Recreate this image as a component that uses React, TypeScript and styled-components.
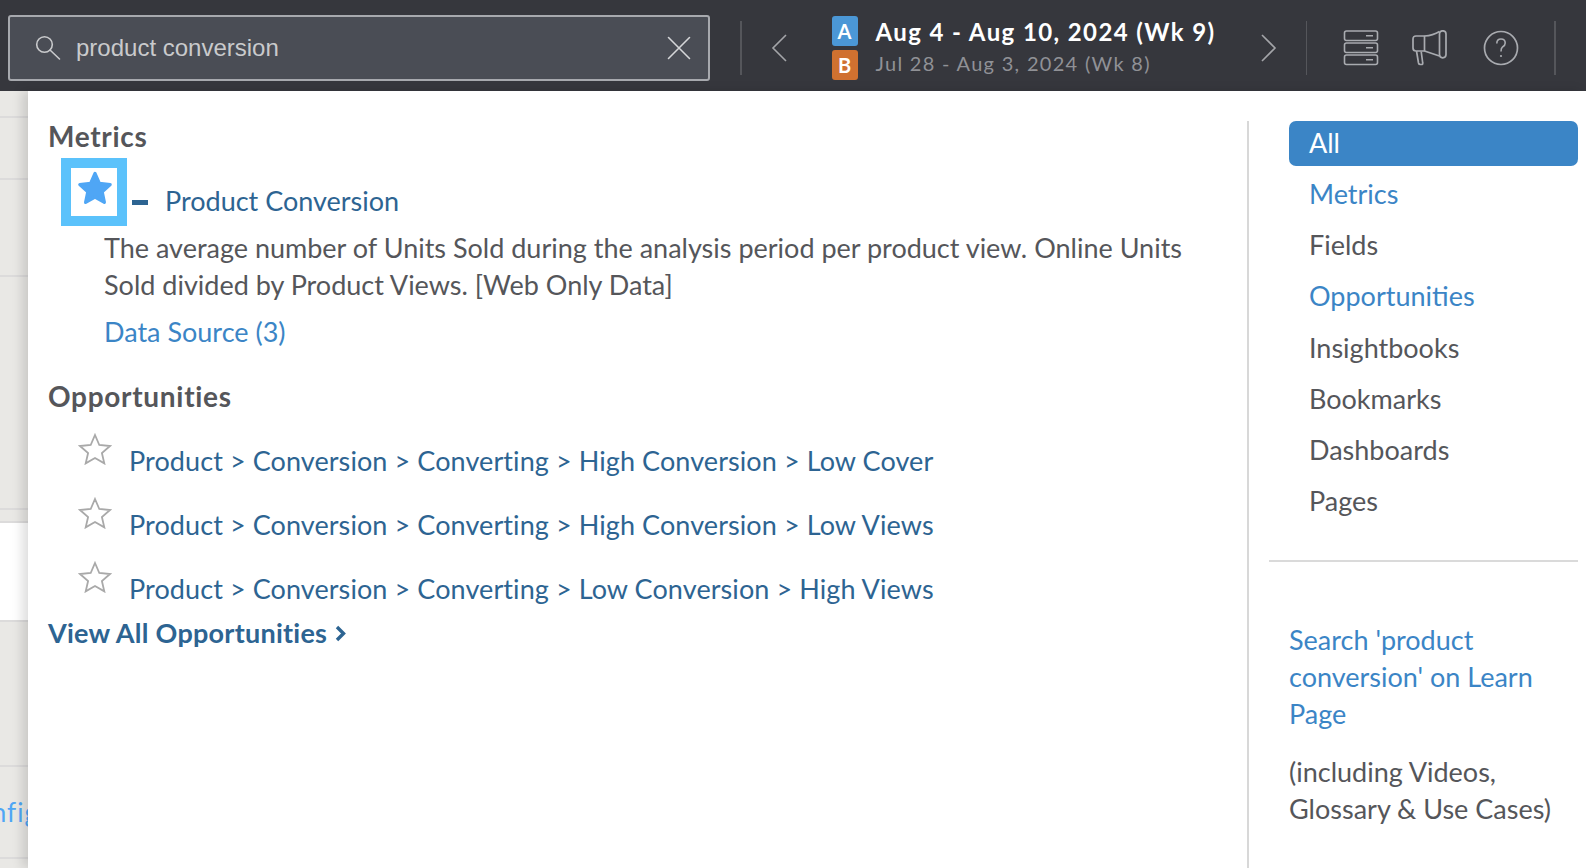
import React from "react";
import styled, { createGlobalStyle } from "styled-components";

const Global = createGlobalStyle`
  html, body { margin: 0; padding: 0; width: 1586px; height: 868px; overflow: hidden; background: #fff; }
  * { box-sizing: border-box; }
`;
const Page = styled.div`
  width: 1586px; height: 868px; display: flex; flex-direction: column; overflow: hidden;
  font-family: "Lato", "Liberation Sans", sans-serif;
`;
const TopBar = styled.header`
  height: 91px; flex: none; background: #36373d; display: flex; align-items: flex-start; padding: 15px 0 0 8px; position: relative;
`;
const SearchBox = styled.div`
  width: 702px; height: 66px; flex: none; background: #4a4d55; border: 2px solid #a7a9ae; border-radius: 3px;
  display: flex; align-items: center; padding: 0 17px 0 24px;
`;
const SearchText = styled.span`
  flex: 1; margin-left: 14px; font: 24px "Liberation Sans", Arial, sans-serif; color: #c9cacc;
`;
const Divider = styled.div<{ $ml: number }>`
  width: 1.5px; height: 54px; margin-top: 6px; background: #55565b; flex: none; margin-left: ${p => p.$ml}px;
`;
const Chevron = styled.svg<{ $ml: number }>`
  width: 16px; height: 28px; flex: none; margin-top: 19px; margin-left: ${p => p.$ml}px;
`;
const Dates = styled.div`
  width: 429px; flex: none; margin-left: 45px; display: flex; flex-direction: column; gap: 4px; margin-top: 1px;
`;
const DateRow = styled.div`display: flex; align-items: center; height: 30px;`;
const Badge = styled.span<{ $bg: string }>`
  width: 26px; height: 30px; border-radius: 3px; background: ${p => p.$bg}; color: #fff; flex: none;
  display: flex; align-items: center; justify-content: center; font-size: 20px; font-weight: 700;
`;
const DateMain = styled.span`
  margin-left: 18px; color: #fff; font-size: 24px; font-weight: 700; letter-spacing: 1.4px; white-space: nowrap;
`;
const DateSub = styled.span`
  margin: 0 0 4px 18px; color: #909196; font-size: 20px; letter-spacing: 1.3px; white-space: nowrap;
`;
const TopIcon = styled.svg<{ $ml: number }>`
  width: 36px; height: 36px; flex: none; margin-top: 15px; margin-left: ${p => p.$ml}px;
`;
const Body = styled.div`flex: 1; display: flex; min-height: 0;`;
const Strip = styled.div`
  width: 28px; flex: none; background: #e9e8e5; display: flex; flex-direction: column; overflow: hidden;
`;
const StripRow = styled.div<{ $h: number; $white?: boolean }>`
  height: ${p => p.$h}px; flex: none; border-bottom: 2px solid #dcdbdb;
  background: ${p => (p.$white ? "#fff" : "transparent")};
  display: flex; align-items: center; justify-content: flex-end; white-space: nowrap;
`;
const StripText = styled.span`color: #4fa6f5; font-size: 26px; letter-spacing: 1px; margin-right: -11px;`;
const Panel = styled.main`
  flex: 1; background: #fff; display: flex; box-shadow: -6px 0 10px rgba(0,0,0,.13); position: relative; min-width: 0;
`;
const Results = styled.section`
  width: 1219px; flex: none; padding: 29px 0 0 20px;
`;
const Heading = styled.h2`
  margin: 0; font-size: 28px; letter-spacing: 0.7px; line-height: 32px; font-weight: 700; color: #55565a;
`;
const MetricHead = styled.div`display: flex; align-items: flex-end; margin: 6px 0 0 13px; height: 68px;`;
const StarBox = styled.div`
  width: 66px; height: 68px; border: 10px solid #5bc2fb; background: #fff; display: flex; align-items: center; justify-content: center;
  padding: 0 0 8px 2px; flex: none;
`;
const Dash = styled.span`
  width: 16px; height: 5px; background: #2d6492; margin: 0 17px 21px 5px; flex: none;
`;
const LinkDark = styled.a`
  color: #2d6492; font-size: 27px; line-height: 37px; white-space: nowrap;
`;
const MetricLink = styled(LinkDark)`margin-bottom: 7px;`;
const Description = styled.p`
  margin: 3px 0 0 56px; width: 1110px; font-size: 27px; line-height: 37px; color: #55565a;
`;
const SourceLink = styled.a`
  display: block; margin: 10px 0 0 56px; color: #3b85c6; font-size: 27px; line-height: 37px;
`;
const OppHeading = styled(Heading)`margin-top: 30px;`;
const OppList = styled.div`display: flex; flex-direction: column; margin-top: 17px;`;
const OppRow = styled.div`display: flex; height: 64px; padding-left: 30px; align-items: flex-start;`;
const OppStar = styled.span`display: flex; margin-top: 4px; flex: none;`;
const OppText = styled(LinkDark)`margin: 13px 0 0 17px; letter-spacing: 0.09px;`;
const ViewAll = styled.a`
  display: flex; align-items: center; gap: 8px; color: #2d6492; font-size: 27px; font-weight: 700; letter-spacing: 0.25px; line-height: 32px; margin-top: -4px;
`;
const VDivider = styled.div`width: 2px; background: #d8d8d8; margin-top: 30px; flex: none;`;
const Side = styled.aside`flex: 1; padding: 30px 8px 0 20px; min-width: 0;`;
const Pill = styled.div`
  height: 45px; margin-left: 20px; border-radius: 7px; background: #3b85c6; color: #fff; font-size: 27px; display: flex; align-items: center; padding: 0 0 2px 20px;
`;
const FilterList = styled.nav`display: flex; flex-direction: column; margin: 2px 0 0 40px;`;
const Filter = styled.a<{ $blue?: boolean }>`
  height: 51.2px; display: flex; align-items: center; font-size: 27px; color: ${p => (p.$blue ? "#3b85c6" : "#55565a")};
`;
const Rule = styled.hr`border: 0; height: 2px; background: #dadada; margin: 34px 0 0 0;`;
const Learn = styled.a`
  display: block; margin: 59px 0 0 20px; font-size: 27px; line-height: 37px; color: #3b85c6; width: 290px;
`;
const Note = styled.p`
  margin: 21px 0 0 20px; font-size: 27px; line-height: 37px; color: #55565a; white-space: nowrap;
`;

const Star = ({ filled }: { filled?: boolean }) =>
  filled ? (
    <svg width="36" height="34" viewBox="0 0 36 34">
      <path d="M18 2.5 L22.4 12.4 L33.2 13.5 L25.2 20.8 L27.4 31.4 L18 26 L8.6 31.4 L10.8 20.8 L2.8 13.5 L13.6 12.4 Z" fill="#4fa6f5" stroke="#4fa6f5" strokeWidth="3.2" strokeLinejoin="round" />
    </svg>
  ) : (
    <svg width="34" height="32" viewBox="0 0 34 32">
      <path d="M17 2 L21.3 12 L32 13 L23.9 20 L26.3 30.4 L17 25 L7.7 30.4 L10.1 20 L2 13 L12.7 12 Z" fill="none" stroke="#a9a9a9" strokeWidth="1.8" strokeLinejoin="miter" />
    </svg>
  );

const opps = [
  "Product > Conversion > Converting > High Conversion > Low Cover",
  "Product > Conversion > Converting > High Conversion > Low Views",
  "Product > Conversion > Converting > Low Conversion > High Views",
];
const filters: [string, boolean][] = [
  ["Metrics", true], ["Fields", false], ["Opportunities", true], ["Insightbooks", false],
  ["Bookmarks", false], ["Dashboards", false], ["Pages", false],
];

export default function App() {
  return (
    <Page>
      <Global />
      <TopBar>
        <SearchBox>
          <svg width="28" height="28" viewBox="0 0 28 28" fill="none" stroke="#c9cacc" strokeWidth="1.6" strokeLinecap="round">
            <circle cx="10.5" cy="10.5" r="7.8" /><path d="M16 16 L25.5 25" />
          </svg>
          <SearchText>product conversion</SearchText>
          <svg width="24" height="24" viewBox="0 0 24 24" fill="none" stroke="#d5d6d8" strokeWidth="1.6" strokeLinecap="round">
            <path d="M1.5 1.5 L22.5 22.5 M22.5 1.5 L1.5 22.5" />
          </svg>
        </SearchBox>
        <Divider $ml={30} />
        <Chevron $ml={29} viewBox="0 0 16 28" fill="none" stroke="#a4a5a9" strokeWidth="1.6"><path d="M15 1 L2 14 L15 27" /></Chevron>
        <Dates>
          <DateRow><Badge $bg="#4b97d6">A</Badge><DateMain>Aug 4 - Aug 10, 2024 (Wk 9)</DateMain></DateRow>
          <DateRow><Badge $bg="#d07130">B</Badge><DateSub>Jul 28 - Aug 3, 2024 (Wk 8)</DateSub></DateRow>
        </Dates>
        <Chevron $ml={0} viewBox="0 0 16 28" fill="none" stroke="#a4a5a9" strokeWidth="1.6"><path d="M1 1 L14 14 L1 27" /></Chevron>
        <Divider $ml={29} />
        <TopIcon $ml={36} viewBox="0 0 36 36" fill="none" stroke="#a9abb0" strokeWidth="1.6">
          <rect x="1.5" y="1" width="33" height="9.5" rx="2" /><rect x="1.5" y="13" width="33" height="9.5" rx="2" /><rect x="1.5" y="25" width="33" height="9.5" rx="2" />
          <path d="M23 5.8 H30 M23 17.8 H30 M23 29.8 H30" />
        </TopIcon>
        <TopIcon $ml={33} viewBox="0 0 36 36" fill="none" stroke="#a9abb0" strokeWidth="1.7" strokeLinejoin="round">
          <path d="M12.5 6 H4 Q1 6 1 9 V18 Q1 21 4 21 H12.5 Z" />
          <path d="M12.5 6 Q21 5.5 27.5 1.5 M12.5 21 L27.5 26" />
          <rect x="27.5" y="0.8" width="6.5" height="27" rx="3.2" />
          <path d="M4.5 21 L6.5 33 Q6.8 34.5 8.5 34.5 H9.5 Q11 34.5 10.7 33 L9.2 21.5" />
        </TopIcon>
        <TopIcon $ml={35} viewBox="0 0 36 36" fill="none" stroke="#a9abb0" strokeWidth="1.7">
          <circle cx="18" cy="18" r="16.5" /><path d="M13.8 13.5 Q13.8 9 18 9 Q22.2 9 22.2 13 Q22.2 15.5 19.5 17 Q18 18 18 21.5" strokeWidth="1.6" /><circle cx="18" cy="26" r="1.1" fill="#a9abb0" stroke="none" />
        </TopIcon>
        <Divider $ml={35} />
      </TopBar>
      <Body>
        <Strip>
          <StripRow $h={27} /><StripRow $h={62} /><StripRow $h={97} /><StripRow $h={233} /><StripRow $h={13} />
          <StripRow $h={99} $white /><StripRow $h={145} />
          <StripRow $h={92}><StripText>nfig</StripText></StripRow>
        </Strip>
        <Panel>
          <Results>
            <Heading>Metrics</Heading>
            <MetricHead>
              <StarBox><Star filled /></StarBox>
              <Dash />
              <MetricLink>Product Conversion</MetricLink>
            </MetricHead>
            <Description>The average number of Units Sold during the analysis period per product view. Online Units Sold divided by Product Views. [Web Only Data]</Description>
            <SourceLink>Data Source (3)</SourceLink>
            <OppHeading>Opportunities</OppHeading>
            <OppList>
              {opps.map(o => (
                <OppRow key={o}><OppStar><Star /></OppStar><OppText>{o}</OppText></OppRow>
              ))}
            </OppList>
            <ViewAll>View All Opportunities
              <svg width="11" height="17" viewBox="0 0 11 17" fill="none" stroke="#2d6492" strokeWidth="3.4"><path d="M2 2 L8.5 8.5 L2 15" /></svg>
            </ViewAll>
          </Results>
          <VDivider />
          <Side>
            <Pill>All</Pill>
            <FilterList>
              {filters.map(([t, b]) => <Filter key={t} $blue={b}>{t}</Filter>)}
            </FilterList>
            <Rule />
            <Learn>Search 'product conversion' on Learn Page</Learn>
            <Note>(including Videos,<br />Glossary &amp; Use Cases)</Note>
          </Side>
        </Panel>
      </Body>
    </Page>
  );
}
